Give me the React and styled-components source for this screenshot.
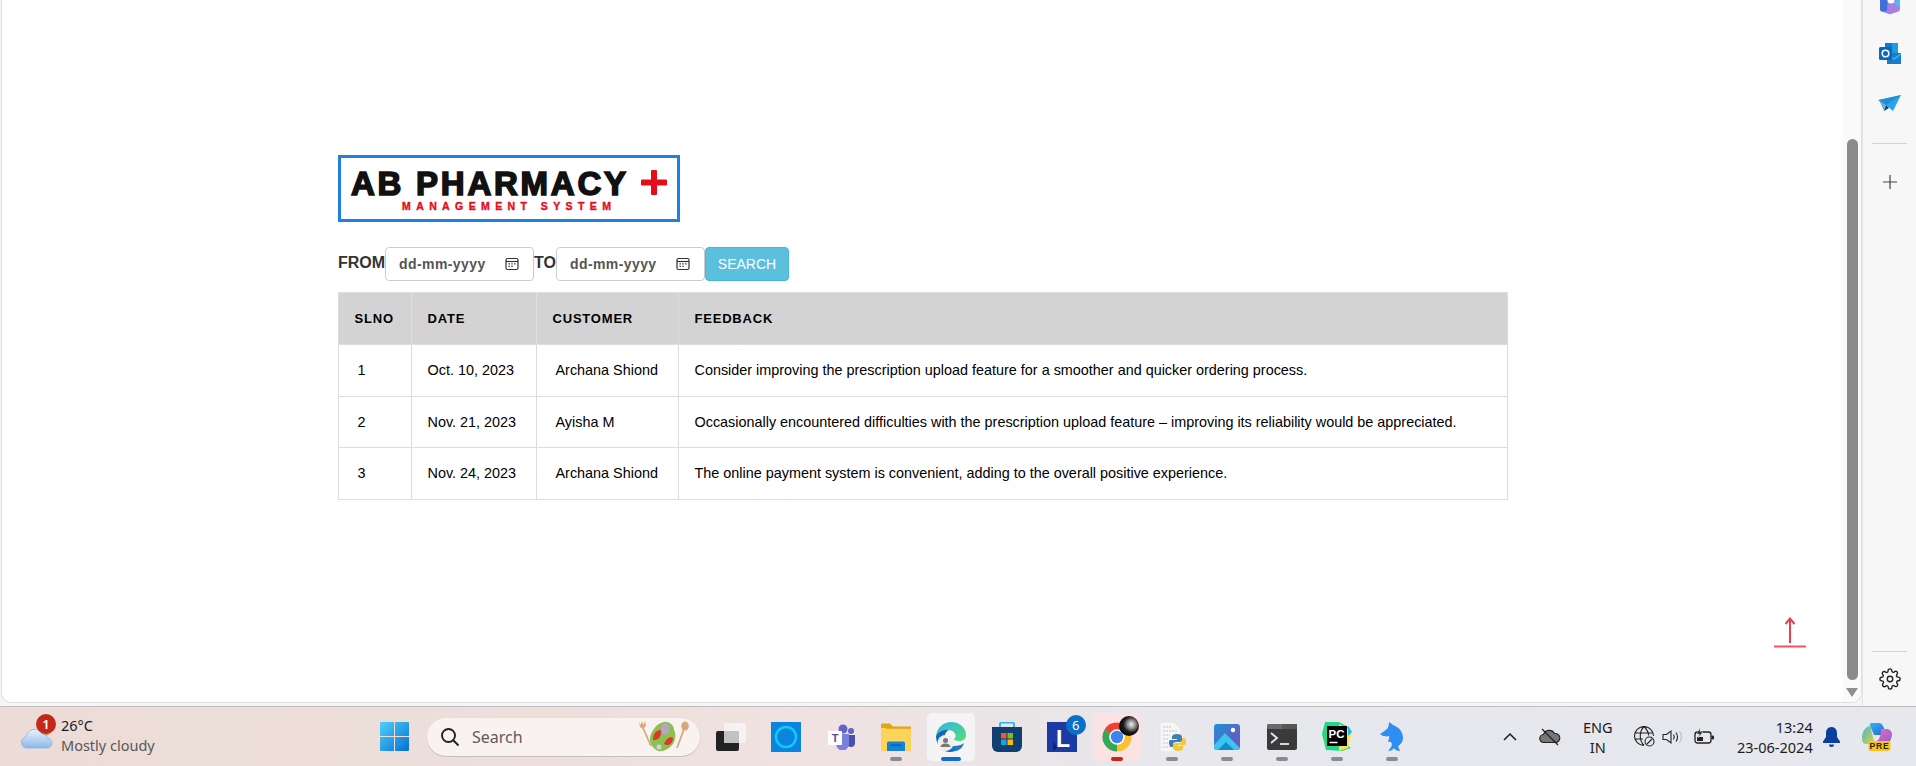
import React from 'react';
import styled, { createGlobalStyle } from 'styled-components';

const GlobalStyle = createGlobalStyle`
    html, body {
        margin: 0;
        padding: 0;
        width: 1916px;
        height: 766px;
        overflow: hidden;
        background: #f4f4f4;
    }
`;

const Desktop = styled.div`
    width: 1916px;
    height: 766px;
    display: flex;
    flex-direction: column;
`;

const Browser = styled.div`
    height: 707px;
    display: flex;
    overflow: hidden;
    background: #f5f5f5;
`;

const Page = styled.main`
    position: relative;
    width: 1861px;
    height: 703px;
    box-sizing: border-box;
    margin-left: 1px;
    padding: 155px 0 0 336px;
    display: flex;
    background: #fff;
    border: solid #dedede;
    border-width: 0 1px 1px 1px;
    border-radius: 0 0 10px 10px;
    overflow: hidden;
`;

const Content = styled.div`
    width: 1170px;
    font-family: "Liberation Sans", Arial, sans-serif;
    color: #000;
`;

const Logo = styled.div`
    width: 342px;
    height: 67px;
    box-sizing: border-box;
    padding: 10px 0 0 10px;
    border: 3px solid #2080e0;
`;

const LogoTitle = styled.div`
    display: flex;
    align-items: center;
    gap: 12px;
    height: 32px;
    font-size: 33px;
    font-weight: bold;
    line-height: 32px;
    letter-spacing: 2.75px;
    color: #111;
    -webkit-text-stroke: 1.6px #111;
`;

const PlusMark = styled.svg`
    margin-top: -3px;
`;

const LogoSub = styled.div`
    margin-left: 51px;
    font-size: 10.5px;
    font-weight: bold;
    line-height: 12px;
    letter-spacing: 5.4px;
    color: #e30e1a;
    -webkit-text-stroke: 0.4px #e30e1a;
    white-space: nowrap;
`;

const Filters = styled.div`
    display: flex;
    align-items: center;
    height: 34px;
    margin-top: 25px;
`;

const FilterLabel = styled.label`
    font-size: 16px;
    font-weight: bold;
    color: #333;
    margin-top: -3px;
`;

const DateField = styled.div`
    width: 149px;
    height: 34px;
    box-sizing: border-box;
    display: flex;
    align-items: center;
    justify-content: space-between;
    padding: 0 14px 0 13px;
    background: #fff;
    border: 1px solid #ccc;
    border-radius: 4px;
`;

const DateText = styled.span`
    font-size: 14px;
    font-weight: bold;
    letter-spacing: 0.4px;
    color: #555;
`;

const SearchButton = styled.button`
    width: 84px;
    height: 34px;
    padding: 0;
    font-family: inherit;
    font-size: 14px;
    color: #fff;
    background: #5bc0de;
    border: 1px solid #46b8da;
    border-radius: 4px;
`;

const Table = styled.table`
    width: 1170px;
    margin-top: 11px;
    table-layout: fixed;
    border-collapse: collapse;
    font-size: 14.4px;
`;

const HeadCell = styled.th`
    width: ${p => p.$w ? p.$w + 'px' : 'auto'};
    height: 52px;
    padding: 0 0 0 15.5px;
    box-sizing: border-box;
    text-align: left;
    font-size: 13px;
    letter-spacing: 0.8px;
    background: #d3d3d3;
    border: 1px solid #ddd;
`;

const Cell = styled.td`
    height: 51.5px;
    padding: 0 0 0 ${p => 15.5 + (p.$indent || 0)}px;
    box-sizing: border-box;
    border: 1px solid #ddd;
    white-space: nowrap;
`;

const BackToTop = styled.a`
    position: absolute;
    left: 1769px;
    top: 613px;
    display: block;
    width: 36px;
    height: 38px;
`;

const Scrollbar = styled.div`
    position: absolute;
    left: 1841px;
    top: 0;
    width: 20px;
    height: 702px;
    background: #fafafa;
`;

const ScrollThumb = styled.div`
    position: absolute;
    left: 4px;
    top: 139px;
    width: 11px;
    height: 541px;
    background: #8b8b8b;
    border-radius: 6px;
`;

const ScrollArrow = styled.div`
    position: absolute;
    left: 3px;
    top: 688px;
    width: 0;
    height: 0;
    border-left: 6.5px solid transparent;
    border-right: 6.5px solid transparent;
    border-top: 9px solid #8f8f8f;
`;

const Sidebar = styled.aside`
    flex: 1;
    display: flex;
    flex-direction: column;
    align-items: center;
    background: #f7f7f7;
    border-left: 1px solid #e6e6e6;
`;

const SideIcon = styled.div`
    width: 24px;
    height: 24px;
    display: flex;
    align-items: center;
    justify-content: center;
    margin-top: ${p => p.$mt || 0}px;
`;

const SideRule = styled.div`
    width: 35px;
    height: 1px;
    background: #d4d4d4;
    margin-top: ${p => p.$mt || 0}px;
`;

const Taskbar = styled.footer`
    height: 59px;
    display: flex;
    align-items: center;
    font-family: "Noto Sans", "Open Sans", sans-serif;
    color: #1c1c1c;
    background: linear-gradient(90deg, #ebdcd7 0%, #eddfdb 30%, #f0e2e0 42%, #e7e7ec 60%, #e6e8ed 100%);
    border-top: 1px solid #bdbdbd;
`;

const Weather = styled.div`
    position: relative;
    width: 379px;
    height: 100%;
    display: flex;
    align-items: center;
    box-sizing: border-box;
    padding-left: 21px;
`;

const WeatherBadge = styled.span`
    position: absolute;
    left: 36px;
    top: 7px;
    width: 20px;
    height: 20px;
    display: flex;
    align-items: center;
    justify-content: center;
    font-size: 13px;
    font-weight: 600;
    color: #fff;
    background: #c4271b;
    border-radius: 50%;
`;

const WeatherText = styled.div`
    margin: -4px 0 0 8px;
    font-size: 14.5px;
    line-height: 20px;
`;

const WeatherNote = styled.div`
    color: #5a5655;
`;

const StartButton = styled.div`
    width: 30px;
    height: 30px;
    display: flex;
    align-items: center;
    justify-content: center;
`;

const SearchBox = styled.div`
    width: 273px;
    height: 38px;
    margin: 0 3.5px 0 18px;
    box-sizing: border-box;
    display: flex;
    align-items: center;
    padding: 0 10px 0 13px;
    background: #f8f3f1;
    border-radius: 19px;
    box-shadow: 0 1px 0 #c9bdb9, 0 0 0 1px #e9dedb;
`;

const SearchLabel = styled.span`
    flex: 1;
    margin-left: 12px;
    font-size: 16px;
    color: #5e5a59;
`;

const AppSlot = styled.div`
    width: 55.1px;
    display: flex;
    justify-content: center;
`;

const AppButton = styled.div`
    position: relative;
    width: 48px;
    height: 48px;
    display: flex;
    align-items: center;
    justify-content: center;
    border-radius: 5px;
    background: ${p => p.$bg || 'transparent'};
    box-shadow: ${p => p.$bg === '#f5f4f5' ? '0 0 0 1px #e8e6e8' : 'none'};
`;

const Indicator = styled.span`
    position: absolute;
    left: 50%;
    bottom: 0;
    width: ${p => p.$w || 12}px;
    height: 4px;
    transform: translateX(-50%);
    border-radius: 2px;
    background: ${p => p.$color || '#8b8b8b'};
`;

const CountBadge = styled.span`
    position: absolute;
    right: 0;
    top: 2px;
    width: 20px;
    height: 20px;
    display: flex;
    align-items: center;
    justify-content: center;
    font-size: 13px;
    color: #fff;
    background: #0a6fc6;
    border-radius: 50%;
`;

const Tray = styled.div`
    flex: 1;
    display: flex;
    align-items: center;
    padding-left: 75px;
`;

const TraySlot = styled.div`
    width: ${p => p.$w}px;
    margin-left: ${p => p.$ml || 0}px;
    display: flex;
    align-items: center;
    justify-content: center;
`;

const TrayText = styled.div`
    width: ${p => p.$w}px;
    margin-left: ${p => p.$ml || 0}px;
    font-size: 14.5px;
    line-height: 20px;
    text-align: ${p => p.$align || 'center'};
    white-space: nowrap;
`;

const PlusIcon = () => (
    <PlusMark width="26" height="25" viewBox="0 0 26 25">
        <path d="M10 1a1 1 0 0 1 1-1h4a1 1 0 0 1 1 1v8.5h9a1 1 0 0 1 1 1v4a1 1 0 0 1-1 1h-9V24a1 1 0 0 1-1 1h-4a1 1 0 0 1-1-1v-8.5H1a1 1 0 0 1-1-1v-4a1 1 0 0 1 1-1h9z" fill="#e30e1a" />
    </PlusMark>
);

const CalendarIcon = () => (
    <svg width="14" height="14" viewBox="0 0 14 14">
        <rect x="1" y="1.5" width="12" height="11" rx="1.5" fill="none" stroke="#333" strokeWidth="1.2" />
        <path d="M1 4.5h12" stroke="#333" strokeWidth="1.2" />
        <path d="M3.5 6.8h1.4M6.3 6.8h1.4M9.1 6.8h1.4M3.5 9.3h1.4M6.3 9.3h1.4" stroke="#333" strokeWidth="1.3" />
    </svg>
);

const UpArrow = () => (
    <svg width="36" height="38" viewBox="0 0 36 38">
        <path d="M19 30V6M14.5 11 19 5.5l4.5 5.5" fill="none" stroke="#e8404a" strokeWidth="2" />
        <path d="M3 33.5h32" stroke="#ee5560" strokeWidth="2" />
    </svg>
);

const CopilotSide = () => (
    <svg width="20" height="24" viewBox="0 0 20 24">
        <path d="M0 0h20v15a3 3 0 0 1-1.500 2.600L11 20a2 2 0 0 1-2 0l-7.500-2.400A3 3 0 0 1 0 15z" fill="#a77fe0" />
        <path d="M0 0h8L7 17 1.500 17.600A3 3 0 0 1 0 15z" fill="#3f6fd8" />
        <path d="M20 5v8l-7-4z" fill="#44c4ea" />
        <circle cx="11" cy="6" r="3.500" fill="#fff" />
    </svg>
);

const OutlookIcon = () => (
    <svg width="22" height="22" viewBox="0 0 22 22">
        <rect x="6" y="1" width="13" height="10" fill="#1e9be0" />
        <rect x="6" y="1" width="7" height="10" fill="#0f78d4" />
        <path d="M8 11h14v11H8z" fill="#1a7cc8" />
        <path d="M8 11l7 5 7-5v2l-7 5-7-5z" fill="#33b0ee" />
        <rect x="0" y="5" width="13" height="13" rx="1.5" fill="#0b66bd" />
        <circle cx="6.5" cy="11.5" r="3.3" fill="none" stroke="#fff" strokeWidth="1.6" />
    </svg>
);

const SendIcon = () => (
    <svg width="23" height="16" viewBox="0 0 23 16">
        <path d="M0 5 23 0 15 16 8 10z" fill="#29a3ea" />
        <path d="M23 0 8 10 6 16 1 5z" fill="#1a7ec9" opacity="0.6" />
        <path d="M8 10l-2 6 5-3z" fill="#123e78" />
    </svg>
);

const SideAdd = () => (
    <svg width="16" height="16" viewBox="0 0 16 16">
        <path d="M8 1v14M1 8h14" stroke="#444" strokeWidth="1.2" />
    </svg>
);

const GearIcon = () => (
    <svg width="22" height="22" viewBox="0 0 24 24" fill="none" stroke="#222" strokeWidth="1.5">
        <circle cx="12" cy="12" r="3" />
        <path d="M19.4 15a1.65 1.65 0 0 0 .33 1.82l.06.06a2 2 0 1 1-2.83 2.83l-.06-.06a1.65 1.65 0 0 0-2.8 1.17V21a2 2 0 1 1-4 0v-.09a1.65 1.65 0 0 0-2.8-1.17l-.06.06a2 2 0 1 1-2.83-2.83l.06-.06a1.65 1.65 0 0 0-1.17-2.8H3a2 2 0 1 1 0-4h.09a1.65 1.65 0 0 0 1.17-2.8l-.06-.06a2 2 0 1 1 2.83-2.83l.06.06a1.65 1.65 0 0 0 2.8-1.17V3a2 2 0 1 1 4 0v.09a1.65 1.65 0 0 0 2.8 1.17l.06-.06a2 2 0 1 1 2.83 2.83l-.06.06a1.65 1.65 0 0 0 1.17 2.8H21a2 2 0 1 1 0 4h-.09a1.65 1.65 0 0 0-1.51 1z" />
    </svg>
);

const CloudIcon = () => (
    <svg width="32" height="24" viewBox="0 0 32 24">
        <defs>
            <linearGradient id="cloudFill" x1="0" y1="0" x2="0" y2="1">
                <stop offset="0" stopColor="#eaf3fc" />
                <stop offset="1" stopColor="#8db8ea" />
            </linearGradient>
        </defs>
        <circle cx="24" cy="6" r="5" fill="#ee8a1d" />
        <path d="M6 23a5.5 5.5 0 0 1-1-10.900A8.5 8.5 0 0 1 21 9a5 5 0 0 1 5 4 5 5 0 0 1 0 10z" fill="url(#cloudFill)" stroke="#8db4e2" strokeWidth="0.8" />
    </svg>
);

const WindowsIcon = () => (
    <svg width="29" height="29" viewBox="0 0 29 29">
        <defs>
            <linearGradient id="winFill" x1="0" y1="0" x2="1" y2="1">
                <stop offset="0" stopColor="#4fd0fb" />
                <stop offset="1" stopColor="#0670d2" />
            </linearGradient>
        </defs>
        <path d="M1 0h13v14H0V1a1 1 0 0 1 1-1zM15 0h13a1 1 0 0 1 1 1v13H15zM0 15h14v14H1a1 1 0 0 1-1-1zM15 15h14v13a1 1 0 0 1-1 1H15z" fill="url(#winFill)" />
    </svg>
);

const SearchGlass = () => (
    <svg width="20" height="20" viewBox="0 0 20 20" fill="none" stroke="#222" strokeWidth="1.9">
        <circle cx="8.5" cy="8.5" r="6.5" />
        <path d="M13 13l5.500 5.500" />
    </svg>
);

const SaladIcon = () => (
    <svg width="52" height="34" viewBox="0 0 52 34">
        <path d="M5 8l8 18" stroke="#d9a878" strokeWidth="1.8" />
        <path d="M39 28 46 9" stroke="#d9a878" strokeWidth="1.8" />
        <path d="M1 1l1.500 4L4 1l1.500 4L7 1l1 5-3 3-3-2z" fill="#d9a878" />
        <ellipse cx="47" cy="6" rx="3.800" ry="4.500" fill="#d9a878" />
        <path d="M12 17c2-7 7-14 14-15 5-1 10 3 10 8 3 5 1 14-4 17-3 3-8 5-12 4-5-2-9-8-8-14z" fill="#8cc152" />
        <path d="M15 20c0-6 3-10 8-10 1 5-2 11-8 10zM26 24c2-5 6-8 9-6 0 5-4 9-9 6z" fill="#d93a2b" />
        <ellipse cx="27" cy="9" rx="4" ry="6" fill="#b9a3c9" />
        <circle cx="21" cy="27" r="2.500" fill="#d8cfe0" />
    </svg>
);

const TaskViewIcon = () => (
    <svg width="30" height="28" viewBox="0 0 30 28">
        <rect x="0" y="8" width="23" height="20" rx="2" fill="#222" />
        <rect x="8" y="0" width="22" height="20" rx="1.5" fill="#f4f4f4" opacity="0.9" />
        <rect x="8" y="8" width="15" height="12" fill="#c4c2c1" />
    </svg>
);

const AlexaIcon = () => (
    <svg width="30" height="30" viewBox="0 0 30 30">
        <rect width="30" height="30" fill="#0a84dc" />
        <circle cx="15" cy="15" r="10" fill="none" stroke="#13c8f6" strokeWidth="2.6" />
    </svg>
);

const TeamsIcon = () => (
    <svg width="27" height="26" viewBox="0 0 27 26">
        <circle cx="15" cy="5" r="4.5" fill="#6264c7" />
        <circle cx="23" cy="7" r="3" fill="#6264c7" />
        <path d="M19 11h8v8a4 4 0 0 1-8 0z" fill="#4c4fa8" />
        <path d="M8 10h13v10a6.5 6.5 0 0 1-13 0z" fill="#7b7fe0" />
        <rect x="0" y="7" width="14" height="14" fill="#fff" />
        <text x="7" y="18" fontSize="11" fontWeight="700" textAnchor="middle" fill="#4e50a8" fontFamily="Liberation Sans">T</text>
    </svg>
);

const FolderIcon = () => (
    <svg width="30" height="28" viewBox="0 0 30 28">
        <path d="M0 2a1.500 1.500 0 0 1 1.500-1.500H9l3 3h18v6H0z" fill="#e0a51c" />
        <path d="M0 5h30v23H0z" fill="#fdd45b" />
        <rect x="5" y="5" width="25" height="1" fill="#e9ae22" />
        <path d="M6 20a1.500 1.500 0 0 1 1.500-1.500h15A1.500 1.500 0 0 1 24 20v8H6z" fill="#1584d4" />
        <rect x="10" y="21.5" width="10" height="1.5" fill="#0b5ea3" />
    </svg>
);

const EdgeIcon = () => (
    <svg width="30" height="30" viewBox="0 0 30 30">
        <defs>
            <linearGradient id="edgeTop" x1="0" y1="0" x2="1" y2="1">
                <stop offset="0" stopColor="#2fb6e8" />
                <stop offset="1" stopColor="#54dd78" />
            </linearGradient>
        </defs>
        <path d="M0 14C1 5 8 0 15 0c9 0 15 6 15 13 0 4-3 6-7 6-3 0-5-1-5-2 3-2 2-8-5-9C7 7 2 10 0 14z" fill="url(#edgeTop)" />
        <path d="M0 14c2-4 7-7 13-6-4 2-5 6-4 10 1 5 6 9 12 10-2 1-4 2-7 2C6 30 0 23 0 14z" fill="#1069b8" />
        <path d="M18 24c4 0 8-1 10-3-1 4-4 7-8 8-3-.5-5-2-6-4z" fill="#1c7bc6" />
        <circle cx="9.5" cy="21" r="8" fill="#eeeeee" />
        <circle cx="9.5" cy="18.5" r="2.500" fill="#777" />
        <path d="M4.500 25a5 3.500 0 0 1 10 0z" fill="#777" />
    </svg>
);

const StoreIcon = () => (
    <svg width="30" height="30" viewBox="0 0 30 30">
        <path d="M8 6V2a1.500 1.500 0 0 1 1.500-1.500h11A1.500 1.500 0 0 1 22 2v4" fill="none" stroke="#29b6e8" strokeWidth="1.8" />
        <path d="M0 5h30v19a6 6 0 0 1-6 6H6a6 6 0 0 1-6-6z" fill="#123f72" />
        <rect x="9" y="11" width="5.5" height="5.5" fill="#ef5a24" />
        <rect x="15.5" y="11" width="5.5" height="5.5" fill="#83b82c" />
        <rect x="9" y="17.5" width="5.5" height="5.5" fill="#12a5e8" />
        <rect x="15.5" y="17.5" width="5.5" height="5.5" fill="#fbb90c" />
    </svg>
);

const LetterIcon = () => (
    <svg width="30" height="30" viewBox="0 0 30 30">
        <rect width="30" height="30" fill="#1c3aa6" />
        <path d="M10 26 6 29V19z" fill="#0d2370" />
        <text x="16" y="25" fontSize="23" fontWeight="700" textAnchor="middle" fill="#fff" fontFamily="Liberation Sans">L</text>
    </svg>
);

const ChromeIcon = () => (
    <svg width="48" height="48" viewBox="0 0 48 48">
        <defs>
            <radialGradient id="ballFill" cx="0.62" cy="0.42" r="0.62">
                <stop offset="0" stopColor="#f0f0f0" />
                <stop offset="0.35" stopColor="#8a8a8a" />
                <stop offset="0.65" stopColor="#1a1a1a" />
                <stop offset="1" stopColor="#050505" />
            </radialGradient>
        </defs>
        <path d="M24 24 11.44 16.75A14.500 14.500 0 0 1 36.56 16.75z" fill="#ea4335" />
        <path d="M24 24 36.56 16.75A14.500 14.500 0 0 1 24 38.5z" fill="#fbc02d" />
        <path d="M24 24 24 38.5A14.500 14.500 0 0 1 11.44 16.75z" fill="#34a853" />
        <circle cx="24" cy="24" r="7" fill="#3f83ee" stroke="#fff" strokeWidth="1.6" />
        <circle cx="36" cy="13" r="10" fill="url(#ballFill)" />
    </svg>
);

const PythonDocIcon = () => (
    <svg width="30" height="30" viewBox="0 0 30 30">
        <path d="M3 0h14l7 7v23H3z" fill="#f6f6f6" stroke="#e2e2e2" />
        <path d="M6 5h9M6 9h14M6 13h7M6 17h5M6 21h5M6 25h7" stroke="#d4d4d4" strokeWidth="1.5" strokeDasharray="2 1" />
        <path d="M20 12c-3 0-5 1-5 3v2h5v1h-6c-2 0-2 1-2 3s1 4 2 4h2v-3c0-1 1-2 3-2h4c1 0 2-1 2-2v-3c0-2-2-3-5-3z" fill="#3f7fb5" />
        <path d="M21 29c3 0 5-1 5-3v-2h-5v-1h6c2 0 2-1 2-3s-1-4-2-4h-2v3c0 1-1 2-3 2h-4c-1 0-2 1-2 2v3c0 2 2 3 5 3z" fill="#f5c53c" />
    </svg>
);

const PhotosIcon = () => (
    <svg width="26" height="26" viewBox="0 0 26 26">
        <defs>
            <linearGradient id="photoBack" x1="0" y1="0" x2="1" y2="1">
                <stop offset="0" stopColor="#1f8fd8" />
                <stop offset="1" stopColor="#7a4db8" />
            </linearGradient>
        </defs>
        <rect width="26" height="26" rx="3" fill="url(#photoBack)" />
        <circle cx="19" cy="6" r="2.2" fill="#fff" />
        <path d="M0 21 11 9l15 15v-1a3 3 0 0 1-3 3H3a3 3 0 0 1-3-3z" fill="#38c5ee" />
        <path d="M4 26l8-8 8 8z" fill="#1787d0" />
    </svg>
);

const TerminalIcon = () => (
    <svg width="30" height="26" viewBox="0 0 30 26">
        <rect width="30" height="26" rx="2" fill="#3a3a3a" />
        <rect width="30" height="5" rx="1.5" fill="#6a6a6a" />
        <rect x="15" width="15" height="5" fill="#575757" />
        <path d="M4 9l6 5-6 5" fill="none" stroke="#e8e8e8" strokeWidth="1.8" />
        <path d="M13 20h9" stroke="#e8e8e8" strokeWidth="1.8" />
    </svg>
);

const PyCharmIcon = () => (
    <svg width="30" height="30" viewBox="0 0 30 30">
        <path d="M3 0h14l11 6-2 18 3 2-9 3-16-1L0 12z" fill="#21d789" />
        <path d="M17 2 30 9l-4 17-9 3z" fill="#f9e24a" />
        <path d="M26 4l4 6-4 4z" fill="#12c2e9" />
        <rect x="5" y="4" width="20" height="20" fill="#000" />
        <path d="M7.5 20.5h8" stroke="#fff" strokeWidth="1.5" />
        <text x="6.5" y="15.5" fontSize="11.5" fontWeight="700" fill="#fff" fontFamily="Liberation Sans">PC</text>
    </svg>
);

const DolphinIcon = () => (
    <svg width="24" height="30" viewBox="0 0 24 30">
        <path d="M9 0c3 2 4 3 6 4 5 2 8 7 8 12 0 4-3 7-5 8l2 5c-3 0-5-1-6-3-1 2-3 3-6 3 2-2 4-5 4-7-2-3-3-6-3-8-3 1-5 0-6 0L0 12c2-1 4-3 7-5 1-1 2-4 2-7z" fill="#2f8ef2" />
        <path d="M11 15c-2 1-3 3-3 5 2 0 4-1 5-2z" fill="#2f8ef2" />
    </svg>
);

const ChevronUp = () => (
    <svg width="16" height="10" viewBox="0 0 16 10">
        <path d="M2 8l6-6 6 6" fill="none" stroke="#1c1c1c" strokeWidth="1.5" />
    </svg>
);

const CloudOff = () => (
    <svg width="22" height="18" viewBox="0 0 22 18">
        <path d="M5 14.5a4 4 0 0 1-.5-8A6 6 0 0 1 15.5 5.5a4.5 4.5 0 0 1 1.5 9z" fill="#777" stroke="#222" strokeWidth="1.1" />
        <path d="M3 1l16 16" stroke="#222" strokeWidth="1.3" />
    </svg>
);

const GlobeOff = () => (
    <svg width="21" height="21" viewBox="0 0 21 21" fill="none" stroke="#222" strokeWidth="1.1">
        <path d="M10 19.5A9.500 9.500 0 1 1 19.5 10M1 7h18M1 13h8M10 .5c-5 5-5 14 0 19M10 .5c3 3 4.500 6 4.800 9" />
        <circle cx="15.5" cy="15.5" r="4.5" fill="#e6e8ed" />
        <path d="M12.5 18.5l6-6" />
    </svg>
);

const VolumeIcon = () => (
    <svg width="21" height="16" viewBox="0 0 21 16" fill="none" stroke="#222" strokeWidth="1.1">
        <path d="M1 5.5h3.500L9 2v12l-4.500-3.500H1z" />
        <path d="M11.5 5.5c1 1.500 1 3.500 0 5M14 3.5c2 2.500 2 6.500 0 9" />
        <path d="M17.5 2c2.500 3.500 2.500 8.500 0 12" stroke="#bdbdbd" />
    </svg>
);

const BatteryIcon = () => (
    <svg width="21" height="17" viewBox="0 0 21 17">
        <rect x="1" y="4" width="16" height="11" rx="2.5" fill="none" stroke="#222" strokeWidth="1.3" />
        <rect x="17.5" y="7.5" width="2.5" height="4" rx="1" fill="#222" />
        <path d="M3 13V9h6v4z" fill="#222" />
        <path d="M6 0 2.500 6h3L4 10l5-6H6z" fill="#222" stroke="#e6e8ed" strokeWidth="0.5" />
    </svg>
);

const BellIcon = () => (
    <svg width="17" height="20" viewBox="0 0 17 20">
        <path d="M8.500 0C4.500 0 3 3 3 6.500v3.500L0 14.500v1.500h17v-1.500L14 10V6.500C14 3 12.500 0 8.500 0z" fill="#0a3fa0" />
        <path d="M6 17.5h5a2.500 2.500 0 0 1-5 0z" fill="#0a3fa0" />
    </svg>
);

const CopilotPre = () => (
    <svg width="30" height="28" viewBox="0 0 30 28">
        <defs>
            <linearGradient id="copA" x1="0" y1="0" x2="1" y2="1">
                <stop offset="0" stopColor="#2fb6ee" />
                <stop offset="1" stopColor="#2f5fd8" />
            </linearGradient>
            <linearGradient id="copB" x1="0" y1="0" x2="1" y2="1">
                <stop offset="0" stopColor="#ef6fb0" />
                <stop offset="1" stopColor="#8e5fd8" />
            </linearGradient>
            <linearGradient id="copC" x1="0" y1="0" x2="1" y2="1">
                <stop offset="0" stopColor="#3fb8c8" />
                <stop offset="1" stopColor="#e8d23a" />
            </linearGradient>
        </defs>
        <path d="M9 0h8c2 0 3 1 4 3l4 9H12L8 3c0-2 0-3 1-3z" fill="url(#copA)" />
        <path d="M19 6h6c2 0 5 2 5 5 0 4-2 7-4 10H11l5-4c2-2 3-6 3-11z" fill="url(#copB)" />
        <path d="M8 3C3 4 0 9 0 15c0 3 1 6 4 6h9z" fill="url(#copC)" />
        <rect x="6.5" y="18" width="22" height="10" rx="2" fill="#fbc414" />
        <text x="17.5" y="26.2" fontSize="8.5" fontWeight="700" letterSpacing="0.8" textAnchor="middle" fill="#222" fontFamily="Liberation Sans">PRE</text>
    </svg>
);

const feedback = [
    { slno: 1, date: 'Oct. 10, 2023', customer: 'Archana Shiond', text: 'Consider improving the prescription upload feature for a smoother and quicker ordering process.' },
    { slno: 2, date: 'Nov. 21, 2023', customer: 'Ayisha M', text: 'Occasionally encountered difficulties with the prescription upload feature – improving its reliability would be appreciated.' },
    { slno: 3, date: 'Nov. 24, 2023', customer: 'Archana Shiond', text: 'The online payment system is convenient, adding to the overall positive experience.' },
];

const apps = [
    { id: 'taskview', icon: <TaskViewIcon /> },
    { id: 'alexa', icon: <AlexaIcon /> },
    { id: 'teams', icon: <TeamsIcon /> },
    { id: 'files', icon: <FolderIcon />, dot: {} },
    { id: 'edge', icon: <EdgeIcon />, bg: '#f5f4f5', dot: { $w: 20, $color: '#0a6fd0' } },
    { id: 'store', icon: <StoreIcon /> },
    { id: 'letter', icon: <LetterIcon />, badge: '6' },
    { id: 'chrome', icon: <ChromeIcon />, bg: '#fbe3e4', dot: { $color: '#c4271b' } },
    { id: 'python', icon: <PythonDocIcon />, dot: {} },
    { id: 'photos', icon: <PhotosIcon />, dot: {} },
    { id: 'terminal', icon: <TerminalIcon />, dot: {} },
    { id: 'pycharm', icon: <PyCharmIcon />, dot: {} },
    { id: 'dolphin', icon: <DolphinIcon />, dot: {} },
];

export default () => (
    <Desktop>
        <GlobalStyle />
        <Browser>
            <Page>
                <Content>
                    <Logo>
                        <LogoTitle>AB PHARMACY <PlusIcon /></LogoTitle>
                        <LogoSub>MANAGEMENT SYSTEM</LogoSub>
                    </Logo>

                    <Filters>
                        <FilterLabel>FROM</FilterLabel>
                        <DateField><DateText>dd-mm-yyyy</DateText><CalendarIcon /></DateField>
                        <FilterLabel>TO</FilterLabel>
                        <DateField><DateText>dd-mm-yyyy</DateText><CalendarIcon /></DateField>
                        <SearchButton>SEARCH</SearchButton>
                    </Filters>

                    <Table>
                        <thead>
                            <tr>
                                <HeadCell $w={73}>SLNO</HeadCell>
                                <HeadCell $w={125}>DATE</HeadCell>
                                <HeadCell $w={142}>CUSTOMER</HeadCell>
                                <HeadCell>FEEDBACK</HeadCell>
                            </tr>
                        </thead>
                        <tbody>
                            {feedback.map(row => (
                                <tr key={row.slno}>
                                    <Cell $indent={3}>{row.slno}</Cell>
                                    <Cell>{row.date}</Cell>
                                    <Cell $indent={3}>{row.customer}</Cell>
                                    <Cell>{row.text}</Cell>
                                </tr>
                            ))}
                        </tbody>
                    </Table>
                </Content>

                <BackToTop href="#top" aria-label="Back to top"><UpArrow /></BackToTop>

                <Scrollbar>
                    <ScrollThumb />
                    <ScrollArrow />
                </Scrollbar>
            </Page>

            <Sidebar>
                <SideIcon $mt={-6}><CopilotSide /></SideIcon>
                <SideIcon $mt={23}><OutlookIcon /></SideIcon>
                <SideIcon $mt={26}><SendIcon /></SideIcon>
                <SideRule $mt={28} />
                <SideIcon $mt={26}><SideAdd /></SideIcon>
                <SideRule $mt={457} />
                <SideIcon $mt={15}><GearIcon /></SideIcon>
            </Sidebar>
        </Browser>

        <Taskbar>
            <Weather>
                <CloudIcon />
                <WeatherBadge>1</WeatherBadge>
                <WeatherText>
                    <div>26°C</div>
                    <WeatherNote>Mostly cloudy</WeatherNote>
                </WeatherText>
            </Weather>

            <StartButton><WindowsIcon /></StartButton>

            <SearchBox>
                <SearchGlass />
                <SearchLabel>Search</SearchLabel>
                <SaladIcon />
            </SearchBox>

            {apps.map(app => (
                <AppSlot key={app.id}>
                    <AppButton $bg={app.bg}>
                        {app.icon}
                        {app.badge && <CountBadge>{app.badge}</CountBadge>}
                        {app.dot && <Indicator {...app.dot} />}
                    </AppButton>
                </AppSlot>
            ))}

            <Tray>
                <TraySlot $w={30}><ChevronUp /></TraySlot>
                <TraySlot $w={30} $ml={10}><CloudOff /></TraySlot>
                <TrayText $w={46} $ml={10}>ENG<br />IN</TrayText>
                <TraySlot $w={24} $ml={12}><GlobeOff /></TraySlot>
                <TraySlot $w={24} $ml={4}><VolumeIcon /></TraySlot>
                <TraySlot $w={28} $ml={6}><BatteryIcon /></TraySlot>
                <TrayText $w={94} $align="right">13:24<br />23-06-2024</TrayText>
                <TraySlot $w={22} $ml={8}><BellIcon /></TraySlot>
                <TraySlot $w={32} $ml={18}><CopilotPre /></TraySlot>
            </Tray>
        </Taskbar>
    </Desktop>
);
